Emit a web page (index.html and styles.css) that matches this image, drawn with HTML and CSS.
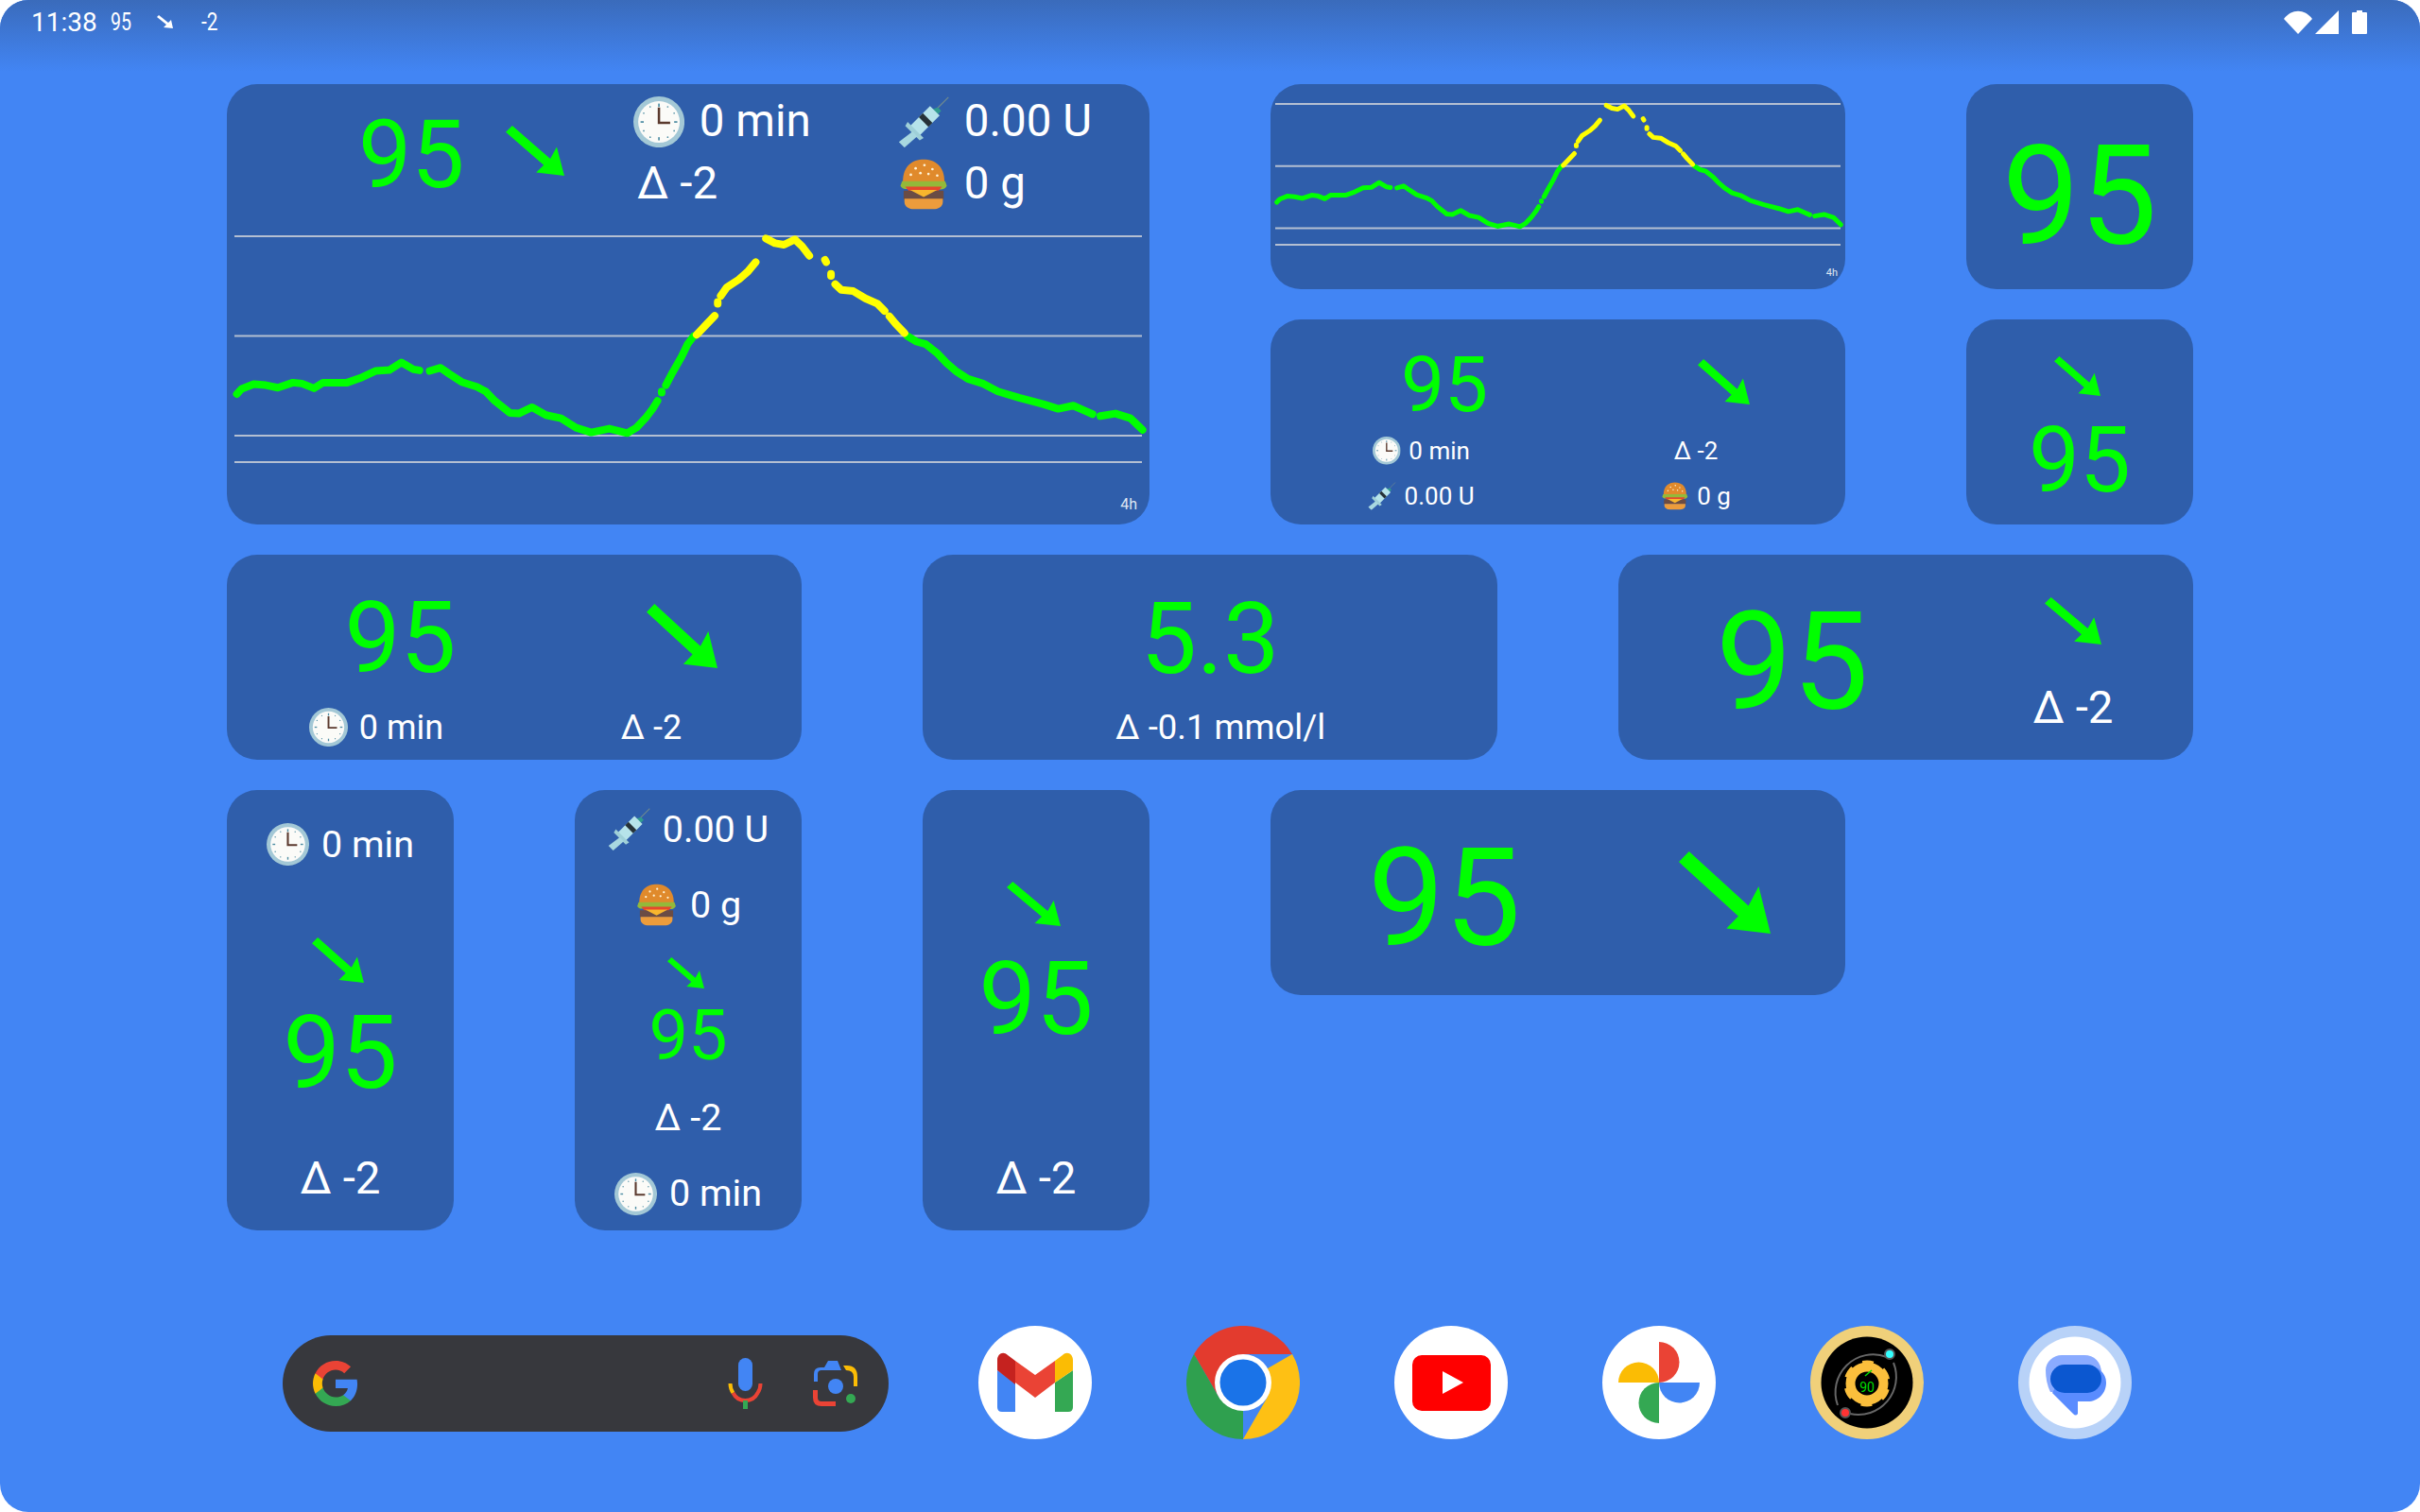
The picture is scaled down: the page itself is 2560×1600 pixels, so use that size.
FILE: index.html
```html
<!DOCTYPE html>
<html lang="en">
<head>
    <meta charset="UTF-8">
    <title>Home screen widgets</title>
    <link rel="stylesheet" href="styles.css">
</head>
<body>
    <svg class="defs" width="0" height="0">
        <defs>
            <symbol id="arrow" viewBox="0 0 54 47" preserveAspectRatio="none">
                <path d="M6 0L0 6L35 37L28 44L54 47L47 20L41 31Z"/>
            </symbol>
            <symbol id="clock" viewBox="0 0 64 64">
                <circle cx="32" cy="32" r="32" fill="#a3c8d6"/>
                <circle cx="32" cy="32" r="26" fill="#fbfbf8"/>
                <g fill="#4f8ea3">
                    <rect x="31" y="9" width="2" height="4"/>
                    <rect x="31" y="51" width="2" height="4"/>
                    <rect x="9" y="31" width="4" height="2"/>
                    <rect x="51" y="31" width="4" height="2"/>
                    <circle cx="43" cy="13" r="1"/>
                    <circle cx="51" cy="21" r="1"/>
                    <circle cx="51" cy="43" r="1"/>
                    <circle cx="43" cy="51" r="1"/>
                    <circle cx="21" cy="51" r="1"/>
                    <circle cx="13" cy="43" r="1"/>
                    <circle cx="13" cy="21" r="1"/>
                    <circle cx="21" cy="13" r="1"/>
                </g>
                <path d="M32 14V33H46" fill="none" stroke="#5b3a2e" stroke-width="3"/>
            </symbol>
            <symbol id="syringe" viewBox="0 0 64 64">
                <path d="M46 18L63 1" stroke="#6f8a8f" stroke-width="1.5"/>
                <path d="M50 14L54 18L47 25L39 17Z" fill="#2f9a8f"/>
                <path d="M40 12L52 24L26 50L14 38Z" fill="#b6e3ea"/>
                <path d="M31 21L43 33L38 38L26 26Z" fill="#263238"/>
                <path d="M12 32L32 52L27 55L9 37Z" fill="#9fd0d8"/>
                <path d="M18 44L24 50L8 64L1 57Z" fill="#a8d8e0"/>
            </symbol>
            <symbol id="burger" viewBox="0 0 64 64">
                <path d="M6 29C6 9 18 1 32 1S58 9 58 29Z" fill="#e08a2c"/>
                <g fill="#fff3d6">
                    <circle cx="22" cy="12" r="1.6"/>
                    <circle cx="33" cy="8" r="1.6"/>
                    <circle cx="43" cy="13" r="1.6"/>
                    <circle cx="28" cy="18" r="1.6"/>
                    <circle cx="38" cy="19" r="1.6"/>
                    <circle cx="16" cy="20" r="1.6"/>
                    <circle cx="49" cy="21" r="1.6"/>
                </g>
                <path d="M5 28H59L61 34C56 42 50 36 44 39S30 42 22 38S8 42 3 34Z" fill="#93b93a"/>
                <path d="M9 35H55L50 41H14Z" fill="#e5482d"/>
                <path d="M7 40H57V51H7Z" fill="#6a4c45"/>
                <path d="M15 39H49L32 48Z" fill="#f8b62d"/>
                <path d="M8 50H56V54C56 60 50 63 44 63H20C14 63 8 60 8 54Z" fill="#ec9c3c"/>
            </symbol>
            <g id="curve">
                <line class="grid-line" x1="28" y1="508" x2="1534" y2="508"/>
                <line class="grid-line" x1="28" y1="824" x2="1534" y2="824"/>
                <line class="grid-line" x1="28" y1="1140" x2="1534" y2="1140"/>
                <line class="grid-line" x1="28" y1="1224" x2="1534" y2="1224"/>
                <g class="green">
                    <path d="M32 1008L40 992L60 977L80 980L100 988L125 972L140 975L160 990L175 972L215 972L240 955L262 935L285 932L305 908L325 930L335 933"/>
                    <path d="M352 935L370 925L385 945L405 970L430 985L445 1000L460 1030L485 1068L500 1070L522 1050L545 1075L570 1085L595 1115L620 1130L650 1118L680 1132L695 1115L710 1085L722 1055L730 1030"/>
                    <path d="M737 1000L737 1004"/>
                    <path d="M744 980L755 940L770 890L780 850L790 825"/>
                    <path d="M1145 825L1160 842L1175 850L1195 880L1210 910L1225 935L1245 960L1270 975L1295 1000L1330 1020L1370 1040L1395 1055L1420 1045L1440 1062L1452 1072"/>
                    <path d="M1465 1078L1490 1070L1515 1085L1535 1122"/>
                </g>
                <g class="yellow">
                    <path d="M795 820L810 790L825 760"/>
                    <path d="M830 716L830 722"/>
                    <path d="M835 697L845 670L865 645L880 620L893 590"/>
                    <path d="M910 515L925 530L940 535L958 518L970 540L982 570"/>
                    <path d="M1008 583L1010 590"/>
                    <path d="M1018 627L1018 634"/>
                    <path d="M1025 660L1035 678L1055 682L1075 705L1095 722L1107 745"/>
                    <path d="M1115 762L1125 785L1140 815"/>
                </g>
            </g>
        </defs>
    </svg>

    <div class="screen">
        <header class="status-bar">
            <div class="status-left">
                <span class="time">11:38</span>
                <span class="status-bg">95</span>
                <svg class="status-arrow" viewBox="0 0 17 14"><path d="M2 0L0 2L10 10L7 13L17 14L15 5L12 8Z"/></svg>
                <span class="status-delta">-2</span>
            </div>
            <div class="status-right">
                <svg class="wifi" viewBox="0 0 30 25"><path d="M0 9C8 -2 22 -2 30 9L15 25Z"/></svg>
                <svg class="signal" viewBox="0 0 25 25"><path d="M25 0V25H0Z"/></svg>
                <svg class="battery" viewBox="0 0 16 25"><path d="M5 0H11V2H15Q16 2 16 3V24Q16 25 15 25H1Q0 25 0 24V3Q0 2 1 2H5Z"/></svg>
            </div>
        </header>

        <main class="widgets">
            <section class="card card-main">
                <div class="main-head">
                    <div class="bg main-bg">95</div>
                    <svg class="arrow main-arrow"><use href="#arrow"/></svg>
                    <div class="stat"><svg class="ico"><use href="#clock"/></svg>0 min</div>
                    <div class="stat"><svg class="ico"><use href="#syringe"/></svg>0.00 U</div>
                    <div class="stat main-delta">Δ -2</div>
                    <div class="stat"><svg class="ico"><use href="#burger"/></svg>0 g</div>
                </div>
                <svg class="graph graph-big" viewBox="28 508 1506 716" preserveAspectRatio="none"><use href="#curve"/></svg>
                <span class="span-label span-big">4h</span>
            </section>

            <section class="card card-graph">
                <svg class="graph graph-small" viewBox="28 508 1506 716" preserveAspectRatio="none"><use href="#curve"/></svg>
                <span class="span-label span-small">4h</span>
            </section>

            <section class="card card-big95">
                <div class="bg">95</div>
            </section>

            <section class="card card-info">
                <div class="info-top">
                    <div class="bg">95</div>
                    <svg class="arrow"><use href="#arrow"/></svg>
                </div>
                <div class="info-stats">
                    <div class="stat"><svg class="ico"><use href="#clock"/></svg>0 min</div>
                    <div class="stat">Δ -2</div>
                    <div class="stat"><svg class="ico"><use href="#syringe"/></svg>0.00 U</div>
                    <div class="stat"><svg class="ico"><use href="#burger"/></svg>0 g</div>
                </div>
            </section>

            <section class="card card-small">
                <svg class="arrow"><use href="#arrow"/></svg>
                <div class="bg">95</div>
            </section>

            <section class="card card-wide">
                <div class="bg">95</div>
                <svg class="arrow"><use href="#arrow"/></svg>
                <div class="stat wide-time"><svg class="ico"><use href="#clock"/></svg>0 min</div>
                <div class="stat wide-delta">Δ -2</div>
            </section>

            <section class="card card-mmol">
                <div class="bg">5.3</div>
                <div class="stat">Δ -0.1 mmol/l</div>
            </section>

            <section class="card card-delta">
                <div class="bg">95</div>
                <div class="delta-side">
                    <svg class="arrow"><use href="#arrow"/></svg>
                    <div class="stat">Δ -2</div>
                </div>
            </section>

            <section class="card card-tall-a">
                <div class="stat"><svg class="ico"><use href="#clock"/></svg>0 min</div>
                <svg class="arrow"><use href="#arrow"/></svg>
                <div class="bg">95</div>
                <div class="stat delta">Δ -2</div>
            </section>

            <section class="card card-tall-b">
                <div class="stat"><svg class="ico"><use href="#syringe"/></svg>0.00 U</div>
                <div class="stat"><svg class="ico"><use href="#burger"/></svg>0 g</div>
                <svg class="arrow"><use href="#arrow"/></svg>
                <div class="bg">95</div>
                <div class="stat">Δ -2</div>
                <div class="stat"><svg class="ico"><use href="#clock"/></svg>0 min</div>
            </section>

            <section class="card card-tall-c">
                <svg class="arrow"><use href="#arrow"/></svg>
                <div class="bg">95</div>
                <div class="stat delta">Δ -2</div>
            </section>

            <section class="card card-large">
                <div class="bg">95</div>
                <svg class="arrow"><use href="#arrow"/></svg>
            </section>
        </main>

        <footer class="dock">
            <div class="search">
                <svg class="g-logo" viewBox="1 1 22 22">
                    <path fill="#4285f4" d="M22.56 12.25c0-.78-.07-1.53-.2-2.25H12v4.26h5.92c-.26 1.37-1.04 2.53-2.21 3.31v2.77h3.57c2.08-1.92 3.28-4.74 3.28-8.09z"/>
                    <path fill="#34a853" d="M12 23c2.97 0 5.46-.98 7.28-2.66l-3.57-2.77c-.98.66-2.23 1.06-3.71 1.06-2.86 0-5.29-1.93-6.16-4.53H2.18v2.84C3.99 20.53 7.7 23 12 23z"/>
                    <path fill="#fbbc05" d="M5.84 14.09c-.22-.66-.35-1.36-.35-2.09s.13-1.43.35-2.09V7.07H2.18C1.43 8.55 1 10.22 1 12s.43 3.45 1.18 4.93l2.85-2.22.81-.62z"/>
                    <path fill="#ea4335" d="M12 5.38c1.62 0 3.06.56 4.21 1.64l3.15-3.15C17.45 2.09 14.97 1 12 1 7.7 1 3.99 3.47 2.18 7.07l3.66 2.84c.87-2.6 3.3-4.53 6.16-4.53z"/>
                </svg>
                <svg class="mic" viewBox="0 0 37 54">
                    <rect x="11" y="0" width="15" height="35" rx="7.5" fill="#4285f4"/>
                    <path d="M2.5 27C2.5 31 3.5 34 5.5 37" fill="none" stroke="#fbbc05" stroke-width="4"/>
                    <path d="M5.5 37C8 42 13 45 18.5 45S29 42 31.5 37C33.500 34 34.500 31 34.500 27" fill="none" stroke="#ea4335" stroke-width="4"/>
                    <rect x="16" y="45" width="5" height="9" fill="#34a853"/>
                </svg>
                <svg class="lens" viewBox="0 0 49 48">
                    <path d="M2 22V14Q2 7 9 7H13L17 0H27L31 10H10Q6 10 6 14V22Z" fill="#4285f4"/>
                    <path d="M33 5H37Q48 5 48 17V27H44V17Q44 10 36 10Z" fill="#fbbc05"/>
                    <path d="M1 31H6V39Q6 43 10 43H25V48H10Q1 48 1 39Z" fill="#ea4335"/>
                    <circle cx="25" cy="27" r="8" fill="#4285f4"/>
                    <circle cx="41" cy="40" r="5" fill="#34a853"/>
                </svg>
            </div>
            <div class="apps">
                <svg class="app" viewBox="0 0 120 120">
                    <circle cx="60" cy="60" r="60" fill="#fff"/>
                    <path d="M20 47L39 60V91H25Q20 91 20 86Z" fill="#4285f4"/>
                    <path d="M81 60L100 47V86Q100 91 95 91H81Z" fill="#34a853"/>
                    <path d="M20 36C20 30 26 26 31 31L39 37V62L20 47Z" fill="#c5221f"/>
                    <path d="M81 37L89 31C94 26 100 30 100 36V47L81 60Z" fill="#fbbc04"/>
                    <path d="M39 37L60 52L81 37V60L60 76L39 60Z" fill="#ea4335"/>
                </svg>
                <svg class="app" viewBox="0 0 120 120">
                    <path d="M60 60L34 75L8 30A60 60 0 0 1 112 30H60Z" fill="#e33b2e"/>
                    <path d="M60 60L112 30A60 60 0 0 1 60 120L86 75Z" fill="#fec014"/>
                    <path d="M60 60V120A60 60 0 0 1 8 30L34 75Z" fill="#2fa04f"/>
                    <circle cx="60" cy="60" r="30" fill="#fff"/>
                    <circle cx="60" cy="60" r="24.500" fill="#1a73e8"/>
                </svg>
                <svg class="app" viewBox="0 0 120 120">
                    <circle cx="60" cy="60" r="60" fill="#fff"/>
                    <rect x="19" y="31" width="83" height="59" rx="10" fill="#f00"/>
                    <path d="M51 48L73 60L51 72Z" fill="#fff"/>
                </svg>
                <svg class="app" viewBox="0 0 120 120">
                    <circle cx="60" cy="60" r="60" fill="#fff"/>
                    <path d="M60 17A21.500 21.500 0 0 1 60 60Z" fill="#ea4335"/>
                    <path d="M17 60A21.500 21.500 0 0 1 60 60Z" fill="#fbbc04"/>
                    <path d="M60 60A21.500 21.500 0 0 0 60 103Z" fill="#34a853"/>
                    <path d="M60 60H103A21.500 21.500 0 0 1 60 60Z" fill="#4285f4"/>
                </svg>
                <svg class="app" viewBox="0 0 120 120">
                    <circle cx="60" cy="60" r="60" fill="#f0d07a"/>
                    <circle cx="60" cy="60" r="48.500" fill="#000"/>
                    <path d="M81 33A40 40 0 0 0 29 84" fill="none" stroke="#666" stroke-width="2"/>
                    <path d="M88 39A40 40 0 0 1 42 93" fill="none" stroke="#666" stroke-width="2"/>
                    <circle cx="84" cy="30" r="5" fill="#3ff" stroke="#555" stroke-width="2"/>
                    <circle cx="37" cy="92" r="5" fill="#f33" stroke="#555" stroke-width="2"/>
                    <circle cx="60" cy="61" r="17.500" fill="none" stroke="#fbbf3c" stroke-width="10"/>
                    <circle cx="60" cy="61" r="22" fill="none" stroke="#fbbf3c" stroke-width="5" stroke-dasharray="11.500 11.540" stroke-dashoffset="40"/>
                    <path d="M58 53L65 47" stroke="#0d0" stroke-width="1.500"/>
                    <text class="gear-text" x="60" y="70">90</text>
                </svg>
                <svg class="app" viewBox="0 0 120 120">
                    <circle cx="60" cy="60" r="60" fill="#b8d2f8"/>
                    <circle cx="60" cy="60" r="48.500" fill="#fff"/>
                    <path d="M29 47C29 38 37 31 46 31H70C80 31 88 38 88 50V70H34Q29 60 29 47Z" fill="#8aabff"/>
                    <path d="M52 42H74C84 42 93 50 93 60C93 72 84 80 74 80H63V93Q61 96 58 93L36 71Z" fill="#5a8cff"/>
                    <rect x="34" y="41" width="54" height="30" rx="15" fill="#0b57d0"/>
                </svg>
            </div>
        </footer>
    </div>
</body>
</html>
```

FILE: styles.css
```css
html, body {
    margin: 0;
    padding: 0;
    background-color: #fff;
}

body {
    font-family: Roboto, "Noto Sans", sans-serif;
    color: #fff;
}

.defs {
    position: absolute;
}

.screen {
    width: 2560px;
    height: 1600px;
    box-sizing: border-box;
    border-radius: 30px;
    overflow: hidden;
    background-color: #4285f4;
}

/* status bar */
.status-bar {
    height: 89px;
    box-sizing: border-box;
    padding: 9px 56px 0 33px;
    display: flex;
    justify-content: space-between;
    align-items: flex-start;
    background: linear-gradient(#3a6bbb 0, #4285f4 76px);
}

.status-left {
    display: flex;
    align-items: center;
    height: 28px;
}

.time {
    font-size: 28px;
    width: 84px;
}

.status-bg {
    font-size: 26px;
    width: 49px;
    transform: scaleX(.75);
    transform-origin: left center;
}

.status-arrow {
    width: 17px;
    height: 14px;
    fill: #fff;
    margin-right: 30px;
}

.status-delta {
    font-size: 26px;
    transform: scaleX(.8);
    transform-origin: left center;
}

.status-right {
    display: flex;
    margin-top: 2px;
}

.status-right svg {
    fill: #fff;
    height: 25px;
}

.wifi {
    width: 30px;
    margin-right: 3px;
}

.signal {
    width: 25px;
    margin-right: 14px;
}

.battery {
    width: 16px;
}

/* widgets */
.widgets {
    display: grid;
    grid-template-columns: repeat(6, 240px);
    grid-template-rows: repeat(5, 216.5px);
    column-gap: 128px;
    row-gap: 32.5px;
    padding-left: 240px;
}

.card {
    position: relative;
    display: flex;
    flex-direction: column;
    align-items: center;
    background-color: #2f5eab;
    border-radius: 32px;
    overflow: hidden;
}

.bg {
    color: #0f0;
    line-height: 1;
}

.arrow {
    display: block;
    fill: #0f0;
}

.stat {
    display: flex;
    align-items: center;
    gap: .33em;
    line-height: 1;
    white-space: nowrap;
}

.ico {
    width: 1.14em;
    height: 1.14em;
    flex-shrink: 0;
}

.grid-line {
    stroke: #b4bfd2;
    stroke-width: 2px;
    vector-effect: non-scaling-stroke;
}

.green path,
.yellow path {
    fill: none;
    stroke-linecap: round;
    stroke-linejoin: round;
    vector-effect: non-scaling-stroke;
}

.green {
    stroke: #0f0;
}

.yellow {
    stroke: #ff0;
}

.graph {
    display: block;
    overflow: visible;
}

.span-label {
    position: absolute;
    color: #dfe6f2;
    line-height: 1;
}

/* big graph widget */
.card-main {
    grid-column: 1 / 4;
    grid-row: 1 / 3;
    align-items: flex-start;
}

.main-head {
    display: grid;
    grid-template-columns: 157px 134px 280px 1fr;
    grid-template-rows: 66px 66px;
    align-items: center;
    padding: 7px 0 0 139px;
    font-size: 47.5px;
}

.main-bg {
    grid-row: 1 / 3;
    font-size: 100px;
    margin-top: 4px;
}

.main-arrow {
    grid-column: 2;
    grid-row: 1 / 3;
    width: 62px;
    height: 53px;
    margin: -5px 0 0 -1px;
}

.main-delta {
    margin-left: 4px;
}

.graph-big {
    width: 960px;
    height: 239px;
    margin: 22px 0 0 8px;
    stroke-width: 8px;
}

.span-big {
    right: 13px;
    bottom: 13px;
    font-size: 16px;
}

/* small graph widget */
.card-graph {
    grid-column: 4 / 6;
    grid-row: 1;
    align-items: flex-start;
}

.graph-small {
    width: 598px;
    height: 149px;
    margin: 21px 0 0 5px;
    stroke-width: 5px;
}

.span-small {
    right: 8px;
    bottom: 12px;
    font-size: 11px;
}

.card-big95 {
    grid-column: 6;
    grid-row: 1;
    font-size: 146px;
    padding-top: 47px;
}

.card-info {
    grid-column: 4 / 6;
    grid-row: 2;
    align-items: stretch;
    font-size: 26px;
}

.info-top {
    display: flex;
    align-items: center;
    height: 70px;
    padding: 34px 0 0 138px;
}

.info-top .bg {
    font-size: 82px;
    width: 88px;
}

.info-top .arrow {
    width: 55px;
    height: 48px;
    margin: -6px 0 0 226px;
}

.info-stats {
    display: grid;
    grid-template-columns: 304px 304px;
    grid-auto-rows: 48px;
    margin-top: 11px;
    justify-items: center;
    align-items: center;
}

.info-stats .stat:nth-child(odd) {
    margin-left: 15px;
}

.info-stats .stat:nth-child(even) {
    margin-left: -12px;
}

.card-small {
    grid-column: 6;
    grid-row: 2;
}

.card-small .arrow {
    width: 49px;
    height: 42px;
    margin: 39px 0 0 -6px;
}

.card-small .bg {
    font-size: 96px;
    margin-top: 20px;
}

/* two column row */
.card-wide {
    grid-column: 1 / 3;
    grid-row: 3;
    display: grid;
    grid-template-columns: 304px 304px;
    grid-template-rows: 144px 1fr;
    font-size: 36px;
    justify-items: center;
    align-items: center;
}

.card-wide .bg {
    font-size: 105px;
    margin: 33px 0 0 63px;
}

.card-wide .arrow {
    width: 75px;
    height: 68px;
    margin: 27px 0 0 50px;
}

.wide-time {
    margin: 5px 0 0 12px;
}

.wide-delta {
    margin: 5px 0 0 -14px;
}

.card-mmol {
    grid-column: 3 / 5;
    grid-row: 3;
    font-size: 36.5px;
}

.card-mmol .bg {
    font-size: 106px;
    padding-top: 36px;
}

.card-mmol .stat {
    margin: 23px 0 0 22px;
}

.card-delta {
    grid-column: 5 / 7;
    grid-row: 3;
    flex-direction: row;
    align-items: flex-start;
}

.card-delta .bg {
    font-size: 144px;
    margin: 42px 0 0 103px;
    width: 260px;
}

.delta-side {
    display: flex;
    flex-direction: column;
    align-items: center;
    width: 140px;
    margin-left: 48px;
    font-size: 47.5px;
}

.delta-side .arrow {
    width: 60px;
    height: 50px;
    margin-top: 45px;
}

.delta-side .stat {
    margin-top: 44px;
}

/* tall widgets */
.card-tall-a,
.card-tall-b,
.card-tall-c {
    grid-row: 4 / 6;
    font-size: 39.5px;
}

.card-tall-a {
    grid-column: 1;
}

.card-tall-a .bg,
.card-tall-c .bg {
    font-size: 108px;
}

.delta {
    font-size: 47.5px;
}

.card-tall-a .stat:first-child {
    margin-top: 35px;
}

.card-tall-a .arrow {
    width: 55px;
    height: 48px;
    margin: 76px 0 0 -6px;
}

.card-tall-a .bg {
    margin-top: 20px;
}

.card-tall-a .delta {
    margin-top: 56px;
}

.card-tall-b {
    grid-column: 2;
}

.card-tall-b .stat:first-child {
    margin-top: 19px;
}

.card-tall-b .stat:nth-child(2) {
    margin-top: 35px;
}

.card-tall-b .arrow {
    width: 39px;
    height: 33px;
    margin: 33px 0 0 -5px;
}

.card-tall-b .bg {
    font-size: 74px;
    margin-top: 13px;
}

.card-tall-b .stat:nth-child(5) {
    margin-top: 30px;
}

.card-tall-b .stat:last-child {
    margin-top: 38px;
}

.card-tall-c {
    grid-column: 3;
}

.card-tall-c .arrow {
    width: 57px;
    height: 47px;
    margin: 97px 0 0 -6px;
}

.card-tall-c .bg {
    margin-top: 23px;
}

.card-tall-c .delta {
    margin-top: 113px;
}

.card-large {
    grid-column: 4 / 6;
    grid-row: 4;
    flex-direction: row;
    align-items: flex-start;
}

.card-large .bg {
    font-size: 144px;
    margin: 43px 0 0 103px;
    width: 157px;
}

.card-large .arrow {
    width: 97px;
    height: 87px;
    margin: 65px 0 0 172px;
}

/* dock */
.dock {
    display: flex;
    align-items: center;
    margin-top: 101.5px;
    padding-left: 299px;
}

.search {
    position: relative;
    display: flex;
    align-items: center;
    width: 641px;
    height: 102px;
    box-sizing: border-box;
    margin-top: 2px;
    padding: 0 32px;
    background-color: #37383d;
    border-radius: 51px;
}

.g-logo {
    width: 48px;
    height: 48px;
}

.mic {
    width: 37px;
    height: 54px;
    margin-left: auto;
}

.lens {
    width: 49px;
    height: 48px;
    margin-left: 52px;
}

.apps {
    display: flex;
    gap: 100px;
    margin-left: 95px;
}

.app {
    display: block;
    width: 120px;
    height: 120px;
}

.gear-text {
    font-family: Roboto, sans-serif;
    font-size: 14px;
    fill: #0d0;
    text-anchor: middle;
}
```
